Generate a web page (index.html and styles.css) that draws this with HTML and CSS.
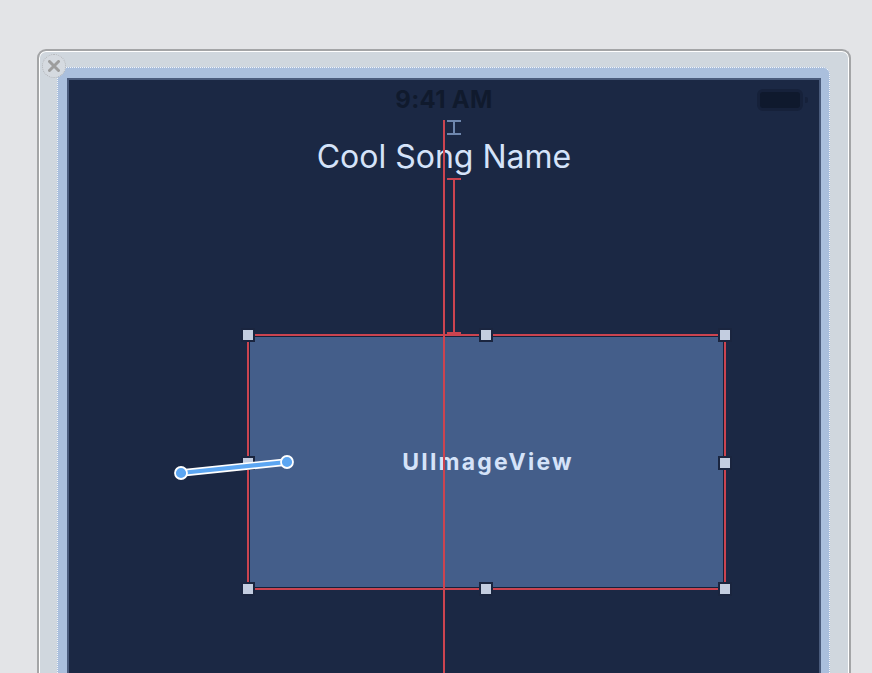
FILE: index.html
```html
<!DOCTYPE html>
<html lang="en">
<head>
<meta charset="utf-8">
<title>Interface Builder – Cool Song Name</title>
<link rel="stylesheet" href="styles.css">
</head>
<body>
<div class="frame">
  <span class="close" aria-label="Close">
    <svg width="12" height="12" viewBox="0 0 12 12"><path d="M1.5 1.5 L10.5 10.5 M10.5 1.5 L1.5 10.5" stroke="#9d9d9d" stroke-width="3" stroke-linecap="round"/></svg>
  </span>
  <div class="bezel">
    <div class="screen">
      <div class="status">
        <span></span>
        <span class="time">9:41 AM</span>
        <span class="battery"><span class="battery-nub"></span></span>
      </div>
      <h1 class="title">Cool Song Name</h1>

      <div class="image-view">
        <div class="image-fill"><span class="label">UIImageView</span></div>
        <span class="handle h-tl"></span>
        <span class="handle h-tc"></span>
        <span class="handle h-tr"></span>
        <span class="handle h-ml"></span>
        <span class="handle h-mr"></span>
        <span class="handle h-bl"></span>
        <span class="handle h-bc"></span>
        <span class="handle h-br"></span>
      </div>

      <span class="guide-center"></span>

      <svg class="ibeam-blue" width="14" height="15" viewBox="0 0 14 15">
        <path d="M0 1 H14 M7 1 V14 M0 14 H14" stroke="#6f87ae" stroke-width="2" fill="none"/>
      </svg>

      <svg class="ibeam-red" width="14" height="156" viewBox="0 0 14 156">
        <path d="M0 1 H14 M7 1 V155 M0 155 H14" stroke="#cb4450" stroke-width="2" fill="none"/>
      </svg>

      <svg class="connector" width="130" height="40" viewBox="0 0 130 40">
        <line x1="12" y1="28" x2="118" y2="17" stroke="#ffffff" stroke-width="7.5" stroke-linecap="round"/>
        <line x1="12" y1="28" x2="118" y2="17" stroke="#5ca6f2" stroke-width="4.2" stroke-linecap="round"/>
        <circle cx="12" cy="28" r="6" fill="#5ca6f2" stroke="#ffffff" stroke-width="1.8"/>
        <circle cx="118" cy="17" r="6" fill="#5ca6f2" stroke="#ffffff" stroke-width="1.8"/>
      </svg>
    </div>
  </div>
</div>
</body>
</html>
```

FILE: styles.css
```css
html, body {
  margin: 0;
  padding: 0;
  overflow: hidden;
  background: #e3e4e7;
  font-family: "Inter", "Liberation Sans", sans-serif;
}

.frame {
  position: relative;
  margin: 49px 0 0 37px;
  width: 814px;
  box-sizing: border-box;
  border: 2px solid #a4a5a7;
  border-bottom: none;
  border-radius: 9px 9px 0 0;
  background: #d0d7de;
  box-shadow: inset 0 0 0 1px #ffffff;
  padding: 16px 19px 0 18px;
}

.close {
  position: absolute;
  left: 3px;
  top: 3px;
  width: 24px;
  height: 24px;
  box-sizing: border-box;
  border: 1px dotted #b3b6ba;
  border-radius: 50%;
  background: #d5dae0;
  display: flex;
  align-items: center;
  justify-content: center;
  z-index: 2;
}

.bezel {
  border: 1px dotted #f4f6f9;
  border-bottom: none;
  border-radius: 7px 7px 0 0;
  background: #aabfdd;
  padding: 10px 8px 0 9px;
}

.screen {
  position: relative;
  height: 640px;
  border: 2px solid #4a5b7c;
  border-bottom: none;
  background: #1b2844;
  overflow: hidden;
}

.status {
  display: grid;
  grid-template-columns: 1fr auto 1fr;
  align-items: center;
  height: 40px;
}

.time {
  font-size: 24px;
  font-weight: 700;
  letter-spacing: 0.3px;
  color: #101a2d;
  line-height: 40px;
}

.battery {
  justify-self: end;
  margin-right: 16px;
  position: relative;
  width: 46px;
  height: 22px;
  box-sizing: border-box;
  border: 3px solid #16213a;
  border-radius: 6px;
  background: #0f192d;
}

.battery-nub {
  position: absolute;
  right: -8px;
  top: 5px;
  width: 3px;
  height: 6px;
  border-radius: 0 2px 2px 0;
  background: #16213a;
}

.title {
  margin: 17px 0 0;
  font-size: 32px;
  font-weight: 400;
  line-height: 40px;
  text-align: center;
  color: #d5e3f9;
}

.image-view {
  position: absolute;
  left: 178px;
  top: 254px;
  width: 479px;
  height: 256px;
  box-sizing: border-box;
  border: 2px solid #cb4450;
  padding: 1px;
  background: #16213a;
  z-index: 1;
}

.image-fill {
  width: 100%;
  height: 100%;
  background: #445e8a;
  display: flex;
  align-items: center;
  justify-content: center;
}

.label {
  font-size: 23px;
  font-weight: 700;
  letter-spacing: 2.2px;
  color: #d5e3f9;
  margin-top: -1px;
  margin-left: 3px;
}

.handle {
  position: absolute;
  width: 10px;
  height: 10px;
  border: 2px solid #1a253f;
  background: #c3cde0;
  z-index: 2;
}

.h-tl, .h-ml, .h-bl { left: -8px; }
.h-tc, .h-bc { left: 230px; }
.h-tr, .h-mr, .h-br { right: -8px; }
.h-tl, .h-tc, .h-tr { top: -8px; }
.h-ml, .h-mr { top: 120px; }
.h-bl, .h-bc, .h-br { bottom: -8px; }

.guide-center {
  position: absolute;
  left: 374px;
  top: 40px;
  bottom: 0;
  width: 2px;
  background: #cb4450;
  z-index: 3;
}

.ibeam-blue {
  position: absolute;
  left: 378px;
  top: 40px;
}

.ibeam-red {
  position: absolute;
  left: 378px;
  top: 98px;
  z-index: 2;
}

.connector {
  position: absolute;
  left: 100px;
  top: 365px;
  z-index: 4;
}
```
